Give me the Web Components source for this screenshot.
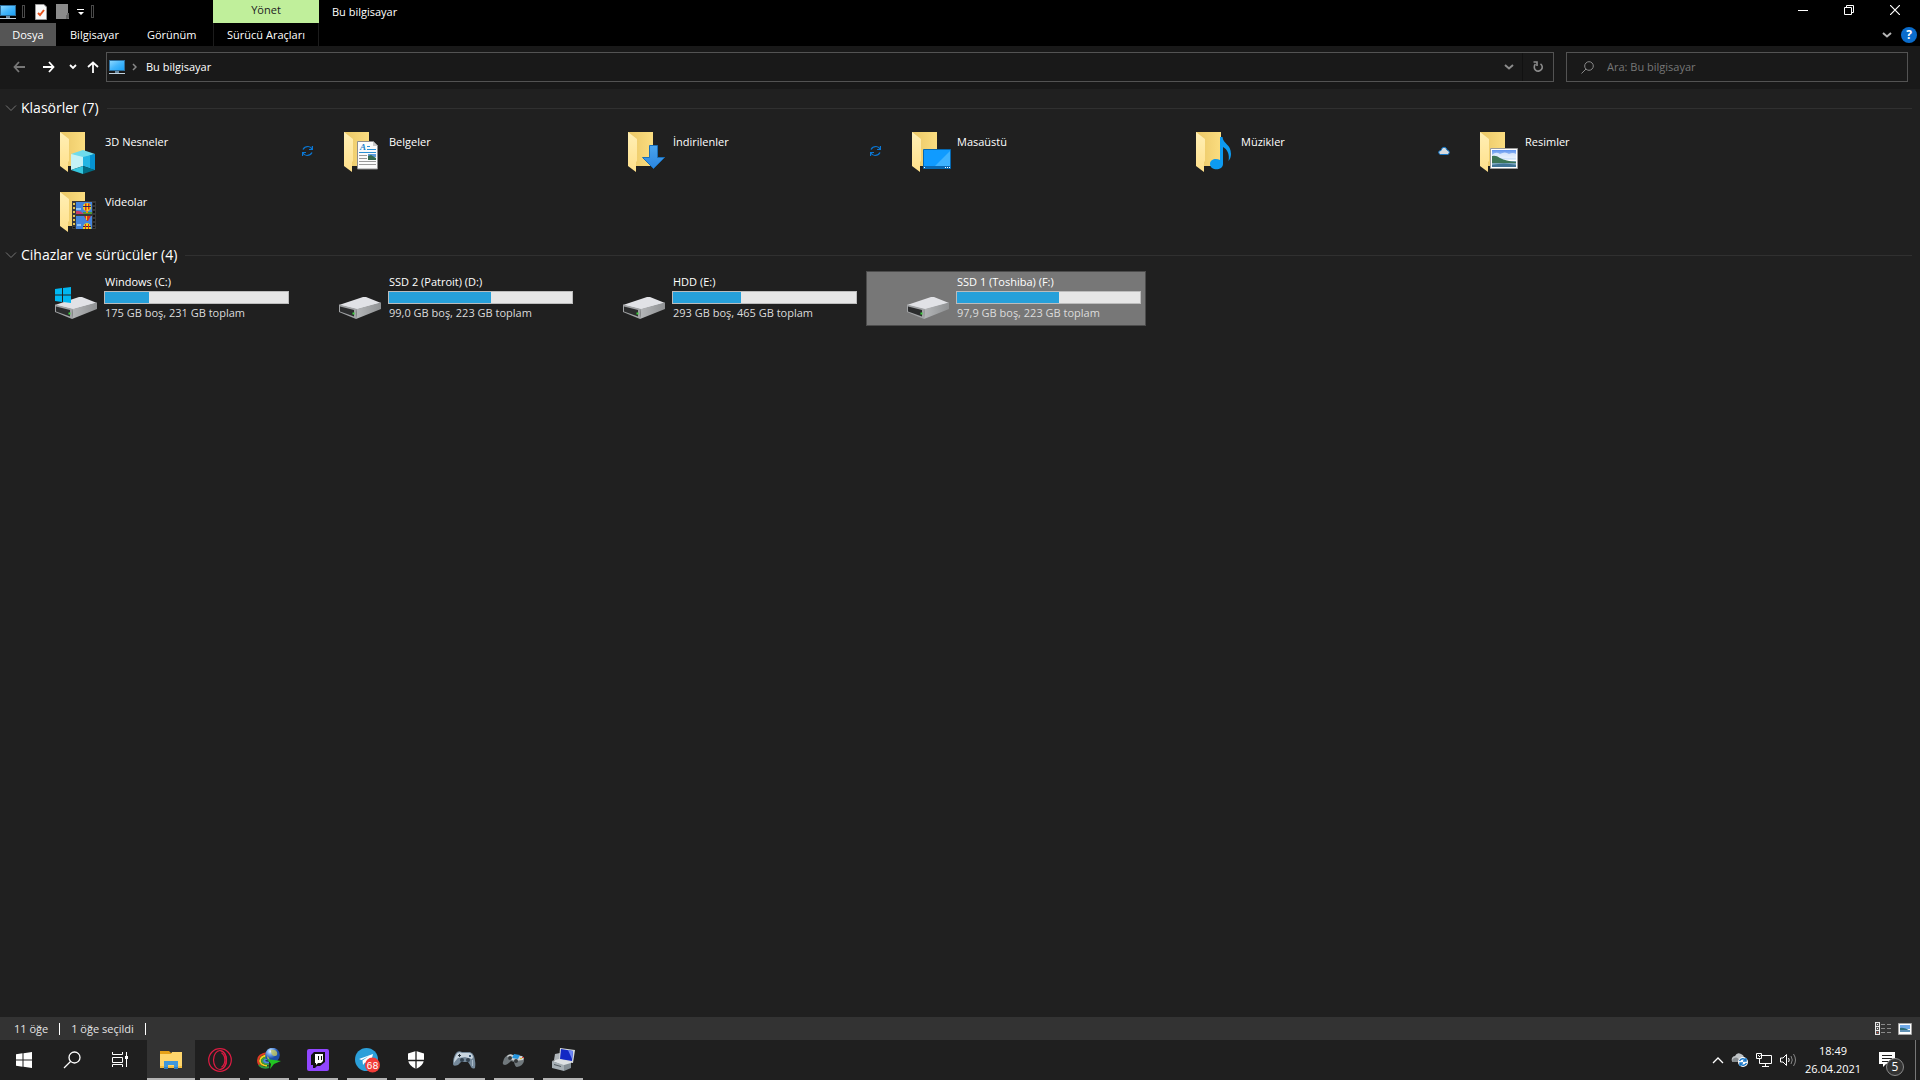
<!DOCTYPE html>
<html lang="tr">
<head>
<meta charset="utf-8">
<title>Bu bilgisayar</title>
<style>
  html, body { margin: 0; height: 100% }
  body {
    background: #202020;
    color: #fff;
    font: 11px/16px 'Open Sans', 'Noto Sans', sans-serif;
    overflow: hidden;
  }
</style>
</head>
<body>
<desktop-screen></desktop-screen>

<script>
const FOLDER = `
  <defs>
    <linearGradient id="back" x1="0" x2="1"><stop offset="0" stop-color="#eac766"/><stop offset="1" stop-color="#fbdd80"/></linearGradient>
    <linearGradient id="flap" x1="0" y1="0" x2="0" y2="1"><stop offset="0" stop-color="#ffefb5"/><stop offset="1" stop-color="#ffe08a"/></linearGradient>
  </defs>
  <path fill="url(#back)" d="M8 4H33V38H8z"/>
  <path fill="url(#flap)" d="M8 4L17 11V33L16 34V44L8 38z"/>`

const DRIVE = `
  <defs>
    <linearGradient id="side" x1="0" x2="1"><stop offset="0" stop-color="#b4b6b8"/><stop offset="1" stop-color="#8f9193"/></linearGradient>
  </defs>
  <path fill="#e1e2e6" d="M3 30L27 22Q28 22 30 22L45 28L21 34.500z"/>
  <path fill="url(#side)" d="M21 34L45 27.500V34L20 44z"/>
  <path fill="#a1a3a5" d="M3 29.500L21 34L20 44L3 37z"/>
  <path fill="#2b2c2d" d="M4 31.500L18 35V41.500L4 36.500z"/>
  <path fill="#3fd23f" d="M16.500 37.500h2v2h-2z"/>`

const PC = `
  <defs><linearGradient id="scr" x1="0" y1="0" x2="1" y2="1"><stop offset="0" stop-color="#8ad7ff"/><stop offset=".5" stop-color="#44b6fb"/><stop offset="1" stop-color="#1ba1f5"/></linearGradient></defs>
  <path fill="#2d6e9c" d="M0 1H16V12H0z"/><path fill="url(#scr)" d="M1 2H15V11H1z"/>
  <path fill="#6f8da3" d="M6 12H10V14H6z"/><path fill="#c3d3df" d="M0 14H16V15H0z"/>`

const BALLOON = `<g><ellipse cx="0" cy="0" rx="4" ry="4" fill="#f5d31a"/><path fill="#d8321e" d="M-2-3.500h1.500v7H-2zM1-3.500h1.500v6H1z"/><path fill="#2a2a55" d="M-4-1h8v1h-8z"/><path fill="#e58a1c" d="M-1 4h2v2h-2z"/></g>`

// name: [width, height, markup]
const ICONS = {
  pc: [16, 16, PC],
  checkdoc: [12, 16, `<path fill="#fafafa" stroke="#9a9a9a" d="M.5.500H9L11.500 3V15.500H.5z"/><path fill="none" stroke="#e8541e" stroke-width="2" d="M3 9l2 2 4-5"/>`],
  graydoc: [14, 16, `<path fill="#8b8b8b" d="M0 0H12V9H13V15H0z"/><path fill="#666" d="M11 9h2v5l-2 1h-1v-4h1z"/>`],
  qat: [8, 8, `<path fill="#fff" d="M0 1H7V2H0zM1 4H7L4 7z"/>`],
  min: [10, 10, `<path fill="#fff" d="M0 5H10V6H0z"/>`],
  restore: [10, 10, `<path fill="none" stroke="#fff" d="M.5 2.500H7.500V9.500H.5zM2.500 2.500V.5H9.500V7.500H7.500"/>`],
  close: [10, 10, `<path fill="none" stroke="#fff" stroke-width="1.200" d="M0 0L10 10M10 0L0 10"/>`],
  chev: [10, 6, `<path fill="none" stroke="currentColor" stroke-width="2" d="M1 1L5 4.500L9 1"/>`],
  smallchev: [8, 6, `<path fill="none" stroke="currentColor" stroke-width="1.800" d="M1 1L4 4L7 1"/>`],
  groupchev: [12, 8, `<path fill="none" stroke="#747474" d="M1 1.500L6 6.500L11 1.500"/>`],
  crumb: [5, 8, `<path fill="none" stroke="#888" stroke-width="1.500" d="M1 1L4 4L1 7"/>`],
  back: [12, 12, `<path fill="none" stroke="#777" stroke-width="1.800" d="M12 6H1.500M6 1L1.500 6L6 11"/>`],
  forward: [12, 12, `<path fill="none" stroke="#fff" stroke-width="1.800" d="M0 6H10.500M6 1L10.500 6L6 11"/>`],
  up: [12, 12, `<path fill="none" stroke="#fff" stroke-width="1.800" d="M6 12V1.500M1 6L6 1.500L11 6"/>`],
  refresh: [12, 12, `<path fill="none" stroke="#8c8c8c" stroke-width="1.600" d="M8.500 2.800A4 4 0 1 1 3.500 3.200M1.500 1H5V5"/>`],
  find: [13, 13, `<circle cx="8" cy="5" r="4.300" fill="none" stroke="#888"/><path stroke="#888" d="M5 8L.5 12.500"/>`],

  objects3d: [48, 48, FOLDER + `
    <path fill="#6edbec" d="M31 22L43 26L31 30L19 26z"/><path fill="#c5f2f6" d="M19 26L31 29V38L19 42z"/>
    <path fill="#35c6de" d="M19 42L31 38V46z"/><path fill="#22b5e3" d="M31 29L43 26V42L31 38z"/>
    <path fill="#0592d1" d="M38 27.300L43 26V42L38 40.300z"/><path fill="#006c84" d="M31 38L43 42L31 46z"/>`],
  documents: [48, 48, FOLDER + `
    <path fill="#fbfbfb" stroke="#8e8e8e" d="M21.500 13.500H37L41.500 18V41H21.500z"/><path fill="#c9c9c9" d="M37 13V18H42z"/>
    <text x="24" y="22" fill="#1981ca" font-family="Liberation Serif" font-style="italic" font-weight="bold" font-size="9">A</text>
    <path fill="#2a8fd4" d="M31 18h3v1h-3zM31 21h9v1h-9zM23 24h17v1H23z"/>
    <path fill="#9a9a9a" d="M23 27h8v1h-8zM23 30h8v1h-8zM23 33h17v1H23zM23 36h17v1H23z"/>
    <path fill="#5a9ad8" d="M32 26h8v3h-8z"/><path fill="#356a50" d="M32 28l3-1 5 3v2h-8z"/>`],
  downloads: [48, 48, FOLDER + `
    <defs><linearGradient id="arr" x1="0" y1="0" x2="0" y2="1"><stop offset="0" stop-color="#4ba4ee"/><stop offset="1" stop-color="#2a85e0"/></linearGradient></defs>
    <path fill="url(#arr)" stroke="#1a6fb8" d="M29.500 17.500H37.500V29.500H44.500L33.500 40.500L22.500 29.500H29.500z"/>`],
  desktop: [48, 48, FOLDER + `
    <path fill="#109bff" stroke="#0668b0" d="M19.500 21.500H46.500V40.500H19.500z"/><path fill="#3fb3ff" d="M46 23V39H30z"/>
    <path fill="#0a68b2" d="M20 38H46V40H20z"/><path fill="#fff" d="M20 39h1v1h-1zM41 39h1v1h-1zM43 39h1v1h-1zM45 39h1v1h-1z"/>`],
  music: [48, 48, FOLDER + `
    <path fill="#0d9bf2" d="M32 9H34.500C35 16 43 16 43 26C43 29 42 31 40.500 33C42 26 39 21 35 19V36C35 43 22 43 22 36C22 31 28 30 32 32z"/>`],
  pictures: [48, 48, FOLDER + `
    <defs><linearGradient id="sky" x1="0" y1="0" x2="0" y2="1"><stop offset="0" stop-color="#5d93ee"/><stop offset="1" stop-color="#e5f2fd"/></linearGradient></defs>
    <path fill="#fff" stroke="#9c9c9c" d="M18.500 20.500H45.500V40.500H18.500z"/><path fill="url(#sky)" d="M20 22H44V32H20z"/>
    <path fill="#f4faff" d="M20 27q4-4 8-1q5-3 9 0q4-2 7 0v4H20z" opacity=".7"/>
    <path fill="#7aa5bd" d="M20 33H44V39H20z"/><path fill="#3c7556" d="M20 28Q24 27 28 30Q34 33 44 34V35H20z"/><path fill="#3f7396" d="M20 37q12-3 24 0v2H20z"/>`],
  videos: [48, 48, FOLDER + `
    <path fill="#383838" d="M20 13H44V41H20z"/><path fill="#4485dd" d="M24 14H40V26H24zM24 28H40V41H24z"/>
    <path fill="#e9c54e" d="M21 15h2v2h-2zM21 19h2v2h-2zM21 23h2v2h-2zM21 27h2v2h-2zM21 31h2v2h-2zM21 35h2v2h-2z"/>
    <path fill="#111" d="M41 15h2v2h-2zM41 19h2v2h-2zM41 23h2v2h-2zM41 27h2v2h-2zM41 31h2v2h-2zM41 35h2v2h-2zM21 39h2v1h-2zM41 39h2v1h-2z"/>
    <path fill="#4a9a3a" d="M31 24H40V26H31z"/><path fill="#c63d6b" d="M24 23q4-1 8 3h-8z"/><path fill="#8ec2f5" d="M24 20h5v2h-5zM25 36h4v2h-4z"/>
    <g transform="translate(35 19)">${BALLOON}</g><path fill="#d8321e" d="M32 28H39L36 33H35z"/><path fill="#f5d31a" d="M34 28h1v4h-1z"/>
    <path fill="#f5d31a" d="M31 41Q31 35 35 35Q39 35 39 41z"/><path fill="#2a2a55" d="M31 38h8v1h-8z"/><path fill="#d8321e" d="M33 36h1v5h-1zM36 36h1v5h-1z"/>`],
  drive: [48, 48, DRIVE],
  windrive: [48, 48, DRIVE + `<path fill="#00b7f1" d="M3 14L10 13V19.500H3zM11 13L19 12V19.500H11zM3 20.500H10V27L3 26zM11 20.500H19V28L11 27z"/>`],
  sync: [12, 12, `<path fill="none" stroke="#0a78d6" stroke-width="1.200" d="M1 4.500Q2.500 1.500 6 1.500Q8.500 1.500 10 4M10 7.500Q8.500 10.500 5 10.500Q2.500 10.500 1 8M10.400 1V4.500H7M.6 11V7.500H4"/>`],
  cloud: [12, 10, `<path fill="#d5dade" stroke="#1377c9" d="M2.500 8.500Q.5 8 .7 6Q1 4.500 3 4.500Q3.500 1.500 6 1.200Q8.500 1.300 9 4Q11.500 4.500 11.300 6.500Q11 8.500 9.500 8.500z"/>`],

  details: [16, 14, `<path fill="#e8e8e8" d="M0 0H5V13H0z"/><path fill="#555" d="M1 1h3v3H1zM1 5h3v3H1zM1 9h3v3H1z"/><path fill="#fff" d="M2 2h1v1H2zM2 6h1v1H2z"/><path fill="#e04030" d="M2 10h1v1H2z"/><path fill="#8a8a8a" d="M6 2h4v1H6zM12 2h4v1h-4zM6 6h4v1H6zM12 6h4v1h-4zM6 10h4v1H6zM12 10h4v1h-4z"/>`],
  tiles: [14, 12, `<path fill="#fff" stroke="#a5a5a5" d="M.5.500H13.500V11.500H.5z"/><path fill="#70a9e8" d="M2 2H12V6H2z"/><path fill="#2d6d78" d="M2 5Q6 4 12 8H2z"/><path fill="#6192b5" d="M2 7H12V9H2z"/>`],

  start: [24, 24, `<path fill="#fff" d="M4 6.300L10.500 5.300V11.500H4zM11.500 5.200L20 4V11.500H11.500zM4 12.500H10.500V18.700L4 17.700zM11.500 12.500H20V20L11.500 18.800z"/>`],
  search: [24, 24, `<circle cx="14.500" cy="9.500" r="5.500" fill="none" stroke="#fff" stroke-width="1.300"/><path stroke="#fff" stroke-width="1.300" d="M10.500 13.500L4 20"/>`],
  taskview: [24, 24, `<path fill="none" stroke="#fff" d="M4.500 4V6.500H14.500V4M4.500 19V16.500H14.500V19M4.500 9.500H14.500V14.500H4.500zM18.500 4V19"/><path fill="#fff" d="M17 8h3v3h-3z"/>`],
  explorer: [24, 24, `<path fill="#e6a117" d="M1 3H10L12 5H22V8H1z"/><path fill="#ffd66c" d="M1 6H12L13 4H23V20H1z"/><path fill="#f5bd3e" d="M1 18H23V20H1z"/><path fill="#3f97dc" d="M5 13H19V21H15V17H9V21H5z"/><path fill="#2b7dc4" d="M5 19h4v2H5zM15 19h4v2h-4z"/>`],
  opera: [24, 24, `<g fill="none" stroke="#dd1c43" stroke-width="1.200"><circle cx="12" cy="12" r="11.300"/><ellipse cx="12" cy="12" rx="6.500" ry="9.500"/><path d="M12 2.500C20.500 3.500 20.500 20.500 12 21.500M13.500 4.800C18 8 18 16 13.500 19.200"/></g>`],
  idm: [24, 24, `
    <defs><radialGradient id="globe" cx=".35" cy=".25"><stop offset="0" stop-color="#f1f7ff"/><stop offset=".4" stop-color="#7fb0ee"/><stop offset="1" stop-color="#1d4da8"/></radialGradient></defs>
    <g fill="none" stroke-width="2"><path stroke="#e23b24" d="M11 5Q1 6 1 12.500Q1 17 6 19"/><path stroke="#f4d21e" d="M12 7Q3 8 3 13Q3.500 17 10 18"/><path stroke="#39a645" d="M13 9Q5 9.500 5 13Q6 16 12 16.500"/><path stroke="#4f88e2" d="M13 11Q7 11 7 13Q8 15 12 14.500"/><path stroke="#2c9a3c" d="M2 17Q6 21 12 19"/></g>
    <circle cx="15.500" cy="7" r="7.300" fill="url(#globe)"/><path fill="#c3c55c" opacity=".8" d="M14 2q4-1 6 2q1 4-2 4q-4 0-4-6zM10 8q2 1 3 4q-3 0-3-4z"/>
    <path fill="#22c522" d="M10 11L24 13L17 16L13 21L14 16z"/>`],
  twitch: [24, 24, `<rect x="1" y="1" width="22" height="22" rx="2" fill="#9146ff"/><path fill="#111" d="M8 4H19V14L14 18H11L9 20H7V17H5V7z"/><path fill="#fff" d="M9 6H17V13L15 15H12L10 17V15H9z"/><path fill="#111" d="M12 8h1v4h-1zM15 8h1v4h-1z"/>`],
  telegram: [26, 26, `<circle cx="12.500" cy="12.500" r="11.500" fill="#2b9fd9"/><path fill="#fff" d="M5 12L19 7L16 19L11 15.500L9 18L8.500 13.500L15 9L7.500 13z"/>
    <circle cx="18.500" cy="18" r="7.500" fill="#f13c38"/><text x="18.500" y="22" text-anchor="middle" font-family="Liberation Mono" font-size="10" fill="#fff">68</text>`],
  shield: [24, 24, `<path fill="#fff" d="M12 3L20 5.500V12Q19 18 12 21Q5 18 4 12V5.500z"/><path stroke="#202020" stroke-width="1.300" d="M12 2V22M3 12.500H21"/>`],
  gamepad: [24, 24, `<path fill="#75899a" d="M3 5Q5 2 9 4H17Q20 5 21 8Q23 15 22 20Q19 22 17 17L15 14H8L5 17Q0 19 0 16Q0 9 3 5z"/><path fill="#c9d6e0" d="M3 7Q5 3 9 5H16Q19 5 20 9L19 11L12 9L5 10Q2 13 1 15Q1 10 3 7z"/><circle cx="9" cy="12" r="2" fill="#33424f"/><circle cx="15" cy="12" r="2" fill="#33424f"/><path fill="#28343d" d="M5 7h3v1H5zM6 6h1v3H6z"/><path fill="#3d5b78" d="M16 7h2v2h-2z"/><path fill="#a9bac8" d="M19 12h1v6h-1z"/>`],
  joypad: [24, 24, `<path fill="#70787c" d="M1 14Q2 8 7 7L18 8Q22 9 22 13Q21 18 15 19Q13 19 12 14L9 13Q5 17 3 17Q0 17 1 14z"/><path fill="#cbd1d3" d="M5 8Q8 5 11 7L20 8Q23 10 21 12L13 13L7 11z"/><path fill="#2696df" d="M12 6L18 7L16 11L10 10z"/><circle cx="8" cy="10" r="2" fill="#35393b"/><circle cx="14" cy="13" r="2" fill="#35393b"/><path fill="#d33f33" d="M20 9h2v1h-2z"/><path fill="#e4b530" d="M18 10h2v1h-2z"/>`],
  device: [24, 24, `<path fill="#aeb5ba" d="M4 6L9 5V12H3z"/><path fill="#d5dadd" d="M9 0L24 2L22 15L8 13z"/><path fill="#1228c4" d="M10 1L22 3L21 13L9 11z"/><path fill="#6d86f5" d="M17 2L22 3L21 11z"/><path fill="#dde1e4" d="M1 13L8 11L20 14V16L13 18z"/><path fill="#a6afb5" d="M1 13L13 17V23L1 20z"/><path fill="#848e95" d="M13 17L20 15V20L13 23z"/><path fill="#50585e" d="M3 16L10 18V19L3 17z"/>`],

  trayup: [12, 8, `<path fill="none" stroke="#fff" stroke-width="1.300" d="M1 7L6 2L11 7"/>`],
  onedrive: [18, 16, `<path fill="#bfc3c5" d="M2 10Q0 9 1 6Q2 4 4 4Q6 0 10 2Q13 3 13 6V10z"/><path fill="#858a8d" d="M2 10Q0 8 3 6Q7 4 9 10z"/><circle cx="12" cy="10" r="5" fill="#fff"/><path fill="none" stroke="#1977c8" stroke-width="1.500" d="M8.500 9Q10 6 13 7L15 8.500M15.500 11Q14 14 11 13L9 11.500M15 6V9H12M9 14V11H12"/>`],
  network: [17, 14, `<path fill="none" stroke="#fff" d="M4.500 2.500H15.500V10.500H3.500V6M9.500 10.500V13.500M6 13.500H13M.5.500H5.500V5.500H.5z"/><path fill="#fff" d="M2 2h1v1H2zM3 3h1v1H3z"/>`],
  volume: [17, 14, `<path fill="none" stroke="#fff" d="M.5 5H3L6.500 1.500V12.500L3 9H.5z"/><path fill="none" stroke="#fff" d="M8.500 5Q10 7 8.500 9"/><path fill="none" stroke="#888" d="M11 3Q13.500 7 11 11M13.500 1Q17.500 7 13.500 13"/>`],
  notes: [16, 16, `<path fill="#fff" d="M0 0H16V12H7L4 15V12H0z"/><path fill="#202020" d="M3 3h10v1H3zM3 6h10v1H3zM3 9h7v1H3z"/>`]
}

const RESET = `
  * { box-sizing: border-box }
  button {
    display: flex; align-items: center; justify-content: center;
    margin: 0; padding: 0; border: 0; background: none; color: inherit; font: inherit;
  }`

class WinIcon extends HTMLElement {
  connectedCallback() {
    const [w, h, body] = ICONS[this.getAttribute('name')]
    if (!this.shadowRoot) this.attachShadow({ mode: 'open' })
    this.shadowRoot.innerHTML = `
      <style>:host { display: block; flex: none } svg { display: block }</style>
      <svg width="${w}" height="${h}" viewBox="0 0 ${w} ${h}" aria-hidden="true">${body}</svg>
    `
  }
}

class RibbonHeader extends HTMLElement {
  constructor() {
    super()
    this.attachShadow({ mode: 'open' }).innerHTML = `
      <style>${RESET}
        :host { display: grid; grid-template: 23px 23px / 213px 106px 1fr auto; background: #000 }
        .quick { display: flex; align-items: center }
        .sep { width: 3px; height: 13px; border: 1px solid #4a4a4a; margin: 0 10px 0 6px }
        .quick button + button { margin-left: 9px }
        .quick button + button + button { margin-left: 7px }
        .quick .sep:last-child { margin-left: 6px }
        .context { background: #c0ef9b; color: #222; text-align: center; line-height: 20px }
        h1 { margin: 0; padding-left: 13px; font: inherit; line-height: 24px }
        .window { display: flex; padding-right: 2px }
        .window button { width: 46px; height: 20px }
        .tabs { display: flex }
        .tabs button { padding: 0 14px }
        .tabs .file { background: #555; width: 56px; padding: 0 }
        .manage { border: solid #1c1c1c; border-width: 0 1px }
        .help { grid-column: 3 / 5; display: flex; justify-content: flex-end; align-items: center; gap: 9px; padding-right: 3px; color: #b5b5b5 }
        .help .q { width: 16px; height: 16px; border-radius: 8px; background: #0a6ccc; color: #fff; font-weight: 700; font-size: 12px }
      </style>
      <div class="quick">
        <win-icon name="pc"></win-icon><span class="sep"></span>
        <button aria-label="Özellikler"><win-icon name="checkdoc"></win-icon></button>
        <button aria-label="Yeni klasör"><win-icon name="graydoc"></win-icon></button>
        <button aria-label="Araç çubuğunu özelleştir"><win-icon name="qat"></win-icon></button>
        <span class="sep"></span>
      </div>
      <div class="context">Yönet</div>
      <h1>Bu bilgisayar</h1>
      <div class="window">
        <button aria-label="Simge durumuna küçült"><win-icon name="min"></win-icon></button>
        <button aria-label="Önceki boyut"><win-icon name="restore"></win-icon></button>
        <button aria-label="Kapat"><win-icon name="close"></win-icon></button>
      </div>
      <nav class="tabs">
        <button class="file">Dosya</button>
        <button>Bilgisayar</button>
        <button>Görünüm</button>
      </nav>
      <button class="manage">Sürücü Araçları</button>
      <div class="help">
        <button aria-label="Şeridi genişlet"><win-icon name="chev"></win-icon></button>
        <button class="q" aria-label="Yardım">?</button>
      </div>
    `
  }
}

class AddressBar extends HTMLElement {
  constructor() {
    super()
    this.attachShadow({ mode: 'open' }).innerHTML = `
      <style>${RESET}
        :host { display: flex; align-items: center; gap: 12px; height: 43px; padding: 0 12px 1px 13px; background: #191919; box-sizing: border-box }
        .nav { display: flex; align-items: center; width: 81px }
        .nav button:nth-child(2) { margin-left: 18px }
        .nav button:nth-child(3) { margin: 0 10px 0 14px }
        .path, .find { display: flex; align-items: center; height: 30px; border: 1px solid #535353 }
        .path { flex: 1; padding-left: 2px }
        .crumb { gap: 7px }
        .crumb span { padding-left: 2px }
        .drop { margin-left: auto; width: 28px; height: 28px; color: #8c8c8c; border-right: 1px solid #111 }
        .reload { width: 30px; height: 28px }
        .find { width: 342px; padding-left: 14px; gap: 13px }
        input { flex: 1; min-width: 0; padding: 0; border: 0; outline: 0; background: none; color: #fff; font: inherit }
        input::placeholder { color: #777; opacity: 1 }
      </style>
      <nav class="nav">
        <button aria-label="Geri"><win-icon name="back"></win-icon></button>
        <button aria-label="İleri"><win-icon name="forward"></win-icon></button>
        <button aria-label="Son konumlar"><win-icon name="smallchev"></win-icon></button>
        <button aria-label="Yukarı"><win-icon name="up"></win-icon></button>
      </nav>
      <div class="path">
        <button class="crumb"><win-icon name="pc"></win-icon><win-icon name="crumb"></win-icon><span>Bu bilgisayar</span></button>
        <button class="drop" aria-label="Önceki konumlar"><win-icon name="chev"></win-icon></button>
        <button class="reload" aria-label="Yenile"><win-icon name="refresh"></win-icon></button>
      </div>
      <label class="find"><win-icon name="find"></win-icon><input type="search" aria-label="Ara" placeholder="Ara: Bu bilgisayar"></label>
    `
  }
}

class ItemGroup extends HTMLElement {
  connectedCallback() {
    if (this.shadowRoot) return
    this.attachShadow({ mode: 'open' }).innerHTML = `
      <style>${RESET}
        :host { display: block }
        .head { width: 100%; height: 32px; padding: 0 8px 0 5px; gap: 4px }
        h2 { margin: 0; font: 14px/20px 'Open Sans', sans-serif }
        .line { flex: 1; height: 1px; margin-left: 4px; background: #303030 }
        .items { display: grid; grid-template-columns: repeat(auto-fill, 280px); gap: 5px 4px; padding-left: 14px }
      </style>
      <button class="head" aria-expanded="true">
        <win-icon name="groupchev"></win-icon><h2>${this.getAttribute('label')}</h2><span class="line"></span>
      </button>
      <div class="items"><slot></slot></div>
    `
  }
}

class ItemTile extends HTMLElement {
  connectedCallback() {
    if (this.shadowRoot) return
    const status = this.getAttribute('status')
    const used = this.getAttribute('used')
    this.attachShadow({ mode: 'open' }).innerHTML = `
      <style>${RESET}
        :host { display: block }
        .tile { display: flex; align-items: center; height: 55px; padding: 0 5px 0 4px }
        :host([selected]) .tile { background: #777; outline: 1px solid #4c4c4c; outline-offset: -1px }
        .status { width: 34px; padding-bottom: 2px }
        .text { flex: 1; align-self: stretch; margin-left: 4px; padding-top: 10px }
        .drive { padding-top: 3px }
        .name, .free { padding-left: 1px }
        .free { color: #dcdcdc }
        .bar { height: 13px; margin: 1px 0; border: 1px solid #bcbcbc; background: #e6e6e6 }
        .fill { height: 100%; background: #26a0da }
      </style>
      <div class="tile">
        <div class="status">${status ? `<win-icon name="${status}"></win-icon>` : ''}</div>
        <win-icon name="${this.getAttribute('icon')}"></win-icon>
        <div class="text ${used ? 'drive' : ''}">
          <div class="name"><slot></slot></div>
          ${used ? `
            <div class="bar" role="meter" aria-label="Kullanılan alan" aria-valuenow="${used}"><div class="fill" style="width: ${used}%"></div></div>
            <div class="free"><slot name="free"></slot></div>` : ''}
        </div>
      </div>
    `
  }
}

class StatusBar extends HTMLElement {
  constructor() {
    super()
    this.attachShadow({ mode: 'open' }).innerHTML = `
      <style>${RESET}
        :host { display: flex; align-items: center; height: 23px; padding: 0 8px 0 14px; background: #333; box-sizing: border-box; color: #e4e4e4 }
        span { margin-right: 11px; padding-right: 11px; line-height: 12px; border-right: 1px solid #fff }
        .views { display: flex; gap: 7px; margin-left: auto }
      </style>
      <span>11 öğe</span><span>1 öğe seçildi</span>
      <div class="views">
        <button aria-label="Ayrıntılar"><win-icon name="details"></win-icon></button>
        <button aria-label="Büyük simgeler"><win-icon name="tiles"></win-icon></button>
      </div>
    `
  }
}

class TaskBar extends HTMLElement {
  static apps = ['explorer', 'opera', 'idm', 'twitch', 'telegram', 'shield', 'gamepad', 'joypad', 'device']

  constructor() {
    super()
    this.attachShadow({ mode: 'open' }).innerHTML = `
      <style>${RESET}
        :host { display: flex; height: 40px; background: #1f1f1f }
        button { height: 40px }
        .sys, .app { width: 48px }
        .apps { display: flex; gap: 1px; margin-left: 3px }
        .app { background: linear-gradient(#b4b4b4, #b4b4b4) center bottom / 40px 2px no-repeat }
        .app.active { background-color: #333; background-size: 48px 2px }
        .tray { display: flex; align-items: center; margin-left: auto; gap: 7px }
        .clock { flex-direction: column; width: 68px; margin-left: -5px; line-height: 18px }
        .notes { width: 42px; margin-left: -8px; position: relative }
        .badge { position: absolute; left: 20px; top: 18px; width: 18px; height: 18px; border: 1px solid #8a8a8a; border-radius: 9px; background: #333; font: 12px/16px 'Open Sans', sans-serif; text-align: center }
        .peek { width: 5px; border-left: 1px solid #777 }
      </style>
      <button class="sys" aria-label="Başlat"><win-icon name="start"></win-icon></button>
      <button class="sys" aria-label="Ara"><win-icon name="search"></win-icon></button>
      <button class="sys" aria-label="Görev görünümü"><win-icon name="taskview"></win-icon></button>
      <div class="apps">
        ${TaskBar.apps.map((name, i) => `<button class="app ${i ? '' : 'active'}" aria-label="${name}"><win-icon name="${name}"></win-icon></button>`).join('')}
      </div>
      <div class="tray">
        <button aria-label="Gizli simgeler"><win-icon name="trayup"></win-icon></button>
        <button aria-label="OneDrive"><win-icon name="onedrive"></win-icon></button>
        <button aria-label="Ağ"><win-icon name="network"></win-icon></button>
        <button aria-label="Ses"><win-icon name="volume"></win-icon></button>
        <button class="clock"><span>18:49</span><span>26.04.2021</span></button>
        <button class="notes" aria-label="Bildirimler"><win-icon name="notes"></win-icon><span class="badge">5</span></button>
        <button class="peek" aria-label="Masaüstünü göster"></button>
      </div>
    `
  }
}

class DesktopScreen extends HTMLElement {
  constructor() {
    super()
    this.attachShadow({ mode: 'open' }).innerHTML = `
      <style>
        :host { display: flex; flex-direction: column; height: 100vh }
        main { flex: 1; min-height: 0; padding-top: 3px; background: #202020 }
      </style>
      <ribbon-header></ribbon-header>
      <address-bar></address-bar>
      <main>
        <item-group label="Klasörler (7)">
          <item-tile icon="objects3d">3D Nesneler</item-tile>
          <item-tile icon="documents" status="sync">Belgeler</item-tile>
          <item-tile icon="downloads">İndirilenler</item-tile>
          <item-tile icon="desktop" status="sync">Masaüstü</item-tile>
          <item-tile icon="music">Müzikler</item-tile>
          <item-tile icon="pictures" status="cloud">Resimler</item-tile>
          <item-tile icon="videos">Videolar</item-tile>
        </item-group>
        <item-group label="Cihazlar ve sürücüler (4)">
          <item-tile icon="windrive" used="24">Windows (C:)<span slot="free">175 GB boş, 231 GB toplam</span></item-tile>
          <item-tile icon="drive" used="56">SSD 2 (Patroit) (D:)<span slot="free">99,0 GB boş, 223 GB toplam</span></item-tile>
          <item-tile icon="drive" used="37">HDD (E:)<span slot="free">293 GB boş, 465 GB toplam</span></item-tile>
          <item-tile icon="drive" used="56" selected>SSD 1 (Toshiba) (F:)<span slot="free">97,9 GB boş, 223 GB toplam</span></item-tile>
        </item-group>
      </main>
      <status-bar></status-bar>
      <task-bar></task-bar>
    `
  }
}

customElements.define('win-icon', WinIcon)
customElements.define('ribbon-header', RibbonHeader)
customElements.define('address-bar', AddressBar)
customElements.define('item-group', ItemGroup)
customElements.define('item-tile', ItemTile)
customElements.define('status-bar', StatusBar)
customElements.define('task-bar', TaskBar)
customElements.define('desktop-screen', DesktopScreen)
</script>
</body>
</html>
